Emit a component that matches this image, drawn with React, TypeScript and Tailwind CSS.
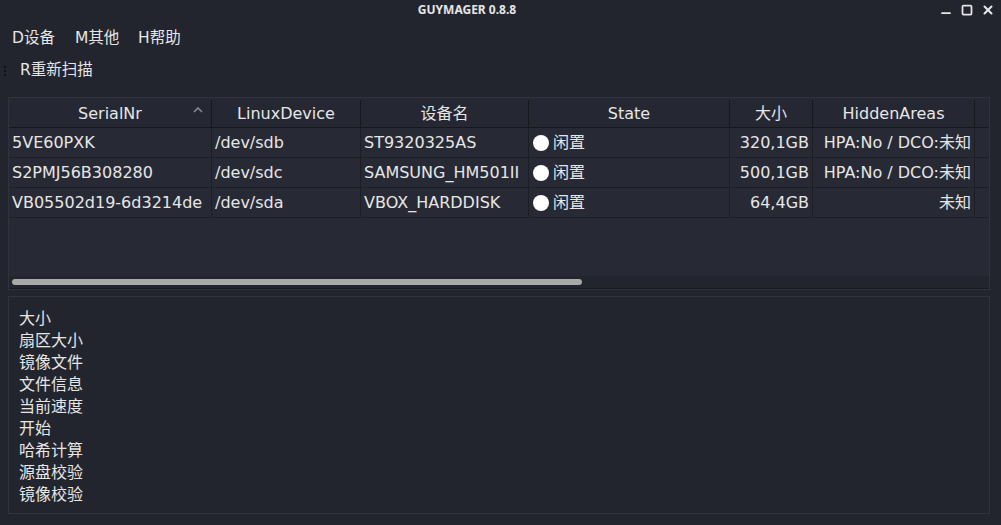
import { Minus, Square, X } from 'lucide-react';

const FONT = '"DejaVu Sans", "Noto Sans CJK SC", sans-serif';

const COLUMNS = [
  { label: 'SerialNr', width: 'w-[203px]', sort: true },
  { label: 'LinuxDevice', width: 'w-[149px]' },
  { label: '设备名', width: 'w-[168px]' },
  { label: 'State', width: 'w-[201px]' },
  { label: '大小', width: 'w-[83px]' },
  { label: 'HiddenAreas', width: 'w-[162px]' },
];

const ROWS = [
  ['5VE60PXK', '/dev/sdb', 'ST9320325AS', '闲置', '320,1GB', 'HPA:No / DCO:未知'],
  ['S2PMJ56B308280', '/dev/sdc', 'SAMSUNG_HM501II', '闲置', '500,1GB', 'HPA:No / DCO:未知'],
  ['VB05502d19-6d3214de', '/dev/sda', 'VBOX_HARDDISK', '闲置', '64,4GB', '未知'],
];

const INFO = ['大小', '扇区大小', '镜像文件', '文件信息', '当前速度', '开始', '哈希计算', '源盘校验', '镜像校验'];

export default function App() {
  return (
    <div
      className="w-[1001px] h-[525px] bg-[#22252e] text-[#e6e6e6] flex flex-col overflow-hidden"
      style={{ fontFamily: FONT }}
    >
      {/* Title bar */}
      <div className="h-[20px] flex items-center relative">
        <div
          className="flex-1 text-center text-[12px] font-bold pr-[67px]"
          style={{ fontFamily: '"Noto Sans", sans-serif' }}
        >
          GUYMAGER 0.8.8
        </div>
        <div className="absolute right-[6px] top-[3px] flex items-center gap-[8px]">
          <Minus size={14} strokeWidth={3} className="translate-y-[3px]" />
          <Square size={12} strokeWidth={3.5} />
          <X size={14} strokeWidth={3.5} />
        </div>
      </div>

      {/* Menu bar */}
      <div className="h-[37px] flex items-center px-[12px] text-[15.5px] pt-[1px]">
        <span className="w-[63px]">D设备</span>
        <span className="w-[63px]">M其他</span>
        <span className="w-[63px]">H帮助</span>
      </div>

      {/* Toolbar */}
      <div className="h-[28px] flex items-center text-[15.5px]">
        <div className="w-[20px] flex flex-col items-start pl-[4px] gap-[2px]">
          <span className="w-[2px] h-[2px] bg-[#111]" />
          <span className="w-[2px] h-[2px] bg-[#111]" />
          <span className="w-[2px] h-[2px] bg-[#111]" />
        </div>
        <span>R重新扫描</span>
      </div>

      {/* Device table */}
      <div className="mt-[12px] mx-[8px] w-[982px] h-[193px] border border-[#30333d] bg-[#272a35] flex flex-col text-[16px]">
        <div className="flex h-[30px] bg-[#252833] border-b border-[#16181d] pt-[2px]">
          {COLUMNS.map(c => (
            <div
              key={c.label}
              className={`${c.width} shrink-0 border-r border-[#16181d] flex items-center justify-center relative`}
            >
              {c.label}
              {c.sort && (
                <svg className="absolute right-[8px] top-[7px]" width="10" height="6" viewBox="0 0 10 6">
                  <path d="M1 5 L5 1 L9 5" stroke="#8a8d96" strokeWidth="1.5" fill="none" />
                </svg>
              )}
            </div>
          ))}
          <div className="flex-1" />
        </div>
        {ROWS.map(r => (
          <div key={r[0]} className="flex h-[30px] border-b border-[#1c1e24]">
            <div className="w-[203px] shrink-0 border-r border-[#1c1e24] flex items-center pl-[3px] whitespace-nowrap">{r[0]}</div>
            <div className="w-[149px] shrink-0 border-r border-[#1c1e24] flex items-center pl-[3px]">{r[1]}</div>
            <div className="w-[168px] shrink-0 border-r border-[#1c1e24] flex items-center pl-[3px] whitespace-nowrap overflow-hidden">{r[2]}</div>
            <div className="w-[201px] shrink-0 border-r border-[#1c1e24] flex items-center pl-[4px] gap-[4px]">
              <span className="w-[16px] h-[16px] rounded-full bg-white" />
              {r[3]}
            </div>
            <div className="w-[83px] shrink-0 border-r border-[#1c1e24] flex items-center justify-end pr-[3px]">{r[4]}</div>
            <div className="w-[162px] shrink-0 border-r border-[#1c1e24] flex items-center justify-end pr-[3px] whitespace-nowrap">{r[5]}</div>
            <div className="flex-1" />
          </div>
        ))}
        <div className="flex-1" />
        {/* Horizontal scrollbar */}
        <div className="h-[13px] bg-[#22252e] border-b border-[#16181d] flex items-center pl-[3px]">
          <div className="w-[570px] h-[6px] rounded-[3px] bg-[#a9a9a9]" />
        </div>
      </div>

      {/* Info panel */}
      <div className="mt-[6px] mx-[8px] w-[982px] h-[218px] border border-[#30333d] bg-[#22252e] px-[10px] pt-[11px] text-[16px] leading-[22px]">
        {INFO.map(t => (
          <div key={t}>{t}</div>
        ))}
      </div>
    </div>
  );
}
